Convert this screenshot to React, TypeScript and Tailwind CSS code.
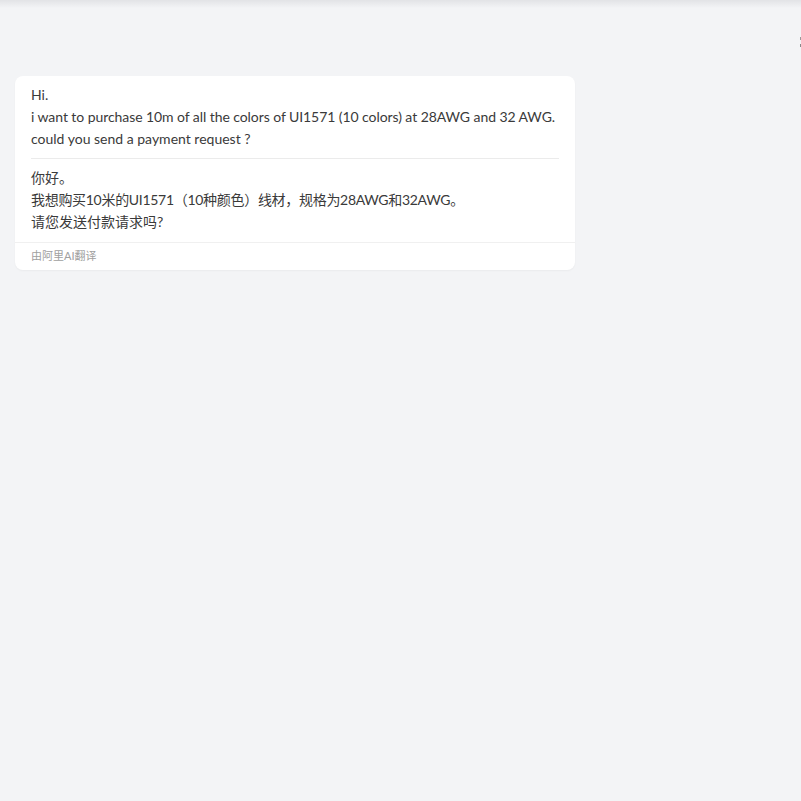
import React from "react";

const font = { fontFamily: 'Lato, "Noto Sans CJK SC", sans-serif' };

export default function App() {
    return (
        <div className="relative min-h-[801px] w-full bg-[#f3f4f6]" style={font}>
            {/* top shadow strip */}
            <div className="h-2 w-full bg-linear-to-b from-[#e2e3e6] to-[#f3f4f6]" />
            <span className="absolute right-0 top-[37px] w-[1px] h-[3px] bg-[#9a9a9a]" />
            <span className="absolute right-0 top-[44px] w-[1px] h-[3px] bg-[#8a8a8a]" />

            <div className="pt-[68px] pl-[15px]">
                <div className="w-[560px] rounded-lg bg-white shadow-[0_1px_2px_rgba(0,0,0,0.04)]">
                    <div className="px-4 pt-2">
                        <div className="text-[14px] leading-[22px] text-[#3a3a3a]">
                            <p>Hi.</p>
                            <p className="whitespace-nowrap tracking-[-0.07px]">i want to purchase 10m of all the colors of UI1571 (10 colors) at 28AWG and 32 AWG.</p>
                            <p>could you send a payment request ?</p>
                        </div>
                        <div className="mt-2 border-t border-[#ebebeb]" />
                        <div className="pt-2 pb-[9px] text-[14px] leading-[22px] text-[#3a3a3a]">
                            <p>你好。</p>
                            <p className="tracking-[-0.3px]">我想购买10米的UI1571（10种颜色）线材，规格为28AWG和32AWG。</p>
                            <p>请您发送付款请求吗?</p>
                        </div>
                    </div>
                    <div className="border-t border-[#f0f0f0] px-4 h-[28px] flex items-center text-[11px] text-[#a0a0a0]">
                        由阿里AI翻译
                    </div>
                </div>
            </div>
        </div>
    );
}
